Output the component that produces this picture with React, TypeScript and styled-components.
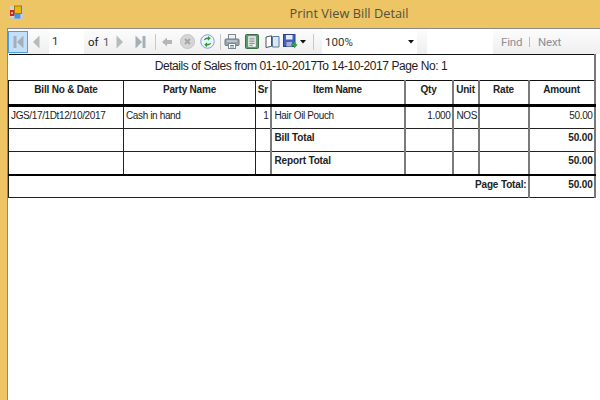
import styled, { createGlobalStyle } from "styled-components"

const Global = createGlobalStyle`
    html, body {
        margin: 0;
        padding: 0;
        width: 600px;
        height: 400px;
        overflow: hidden;
        background: #fff;
    }
    #root {
        height: 100%;
    }
`

const Grip = () => (
    <svg width="14" height="14" viewBox="0 0 14 14">
        <rect x="0.5" y="0.5" width="13" height="13" fill="#dcd3b4" stroke="#c9c6bc" />
        <rect x="1" y="5" width="4.5" height="6" fill="#c8242c" />
        <rect x="2" y="7" width="2" height="2" fill="#f3b0a0" />
        <rect x="5.5" y="1" width="7" height="7.5" fill="#f2b705" stroke="#9c7a18" strokeWidth="1" />
        <rect x="5.5" y="9" width="6" height="4.5" fill="#4f8fe8" />
    </svg>
)

const First = () => (
    <svg width="11" height="14" viewBox="0 0 11 14">
        <rect x="0.5" y="1" width="3" height="12" fill="#a4afb6" />
        <path d="M10.5 0.5v13L4 7z" fill="#a4afb6" />
    </svg>
)
const Prev = () => (
    <svg width="8" height="14" viewBox="0 0 8 14">
        <path d="M7.5 0.5v13L1 7z" fill="#b6bbbe" />
    </svg>
)
const Next = () => (
    <svg width="8" height="14" viewBox="0 0 8 14">
        <path d="M0.5 0.5v13L7 7z" fill="#b6bbbe" />
    </svg>
)
const Last = () => (
    <svg width="11" height="14" viewBox="0 0 11 14">
        <path d="M0.5 0.5v13L7 7z" fill="#a4afb6" />
        <rect x="7.5" y="1" width="3" height="12" fill="#a4afb6" />
    </svg>
)
const Back = () => (
    <svg width="10" height="10" viewBox="0 0 10 10">
        <path d="M0 5l5-4.5V3h5v4H5v2.5z" fill="#b5b5b5" />
    </svg>
)
const Stop = () => (
    <svg width="15" height="15" viewBox="0 0 15 15">
        <circle cx="7.5" cy="7.5" r="7" fill="#d6d6d6" stroke="#c4c4c4" />
        <path d="M5 5l5 5M10 5l-5 5" stroke="#a6a6a6" strokeWidth="2" />
    </svg>
)
const Refresh = () => (
    <svg width="15" height="15" viewBox="0 0 16 16">
        <circle cx="8" cy="8" r="7.2" fill="#eef5fc" stroke="#6f9fd8" />
        <path d="M4 7c.5-2.4 2.4-3.6 4.5-3.2V2l3 2.6-3 2.6V5.6C6.8 5.3 5.5 6 4 7z" fill="#2f9a3c" />
        <path d="M12 9c-.5 2.4-2.4 3.6-4.5 3.2V14l-3-2.6 3-2.6v1.6c1.7.3 3-.4 4.5-1.4z" fill="#2f9a3c" />
    </svg>
)
const Printer = () => (
    <svg width="16" height="15" viewBox="0 0 15 15">
        <rect x="4" y="0.5" width="7" height="5" fill="#eef1f4" stroke="#7c8894" />
        <rect x="0.5" y="5" width="14" height="6.5" rx="1" fill="#98a4ae" stroke="#6c7883" />
        <rect x="2.5" y="6.5" width="10" height="1.2" fill="#cfd6dc" />
        <rect x="4" y="9.5" width="7" height="5" fill="#fff" stroke="#7c8894" />
        <path d="M5.5 11.5h4M5.5 13h4" stroke="#5b8fc9" />
    </svg>
)
const Layout = () => (
    <svg width="14" height="15" viewBox="0 0 14 15">
        <rect x="0.5" y="0.5" width="13" height="14" rx="1" fill="#569a68" stroke="#3c6f48" />
        <rect x="3" y="2" width="8" height="11" fill="#fff" stroke="#7d9a84" strokeWidth="0.6" />
        <path d="M4.3 4.2h5.4M4.3 6h5.4M4.3 7.8h5.4M4.3 9.6h5.4M4.3 11.3h3.6" stroke="#5c666f" strokeWidth="0.8" />
    </svg>
)
const PageSetup = () => (
    <svg width="15" height="13" viewBox="0 0 15 13">
        <path d="M1 2L6.5 0.8v10.5L1 12.5z" fill="#fff" stroke="#46525e" />
        <path d="M7.5 1.5h6.5v10.5H7.5z" fill="#dbe7f4" stroke="#5d7a99" />
    </svg>
)
const Save = () => (
    <svg width="15" height="15" viewBox="0 0 15 15">
        <rect x="0.5" y="0.5" width="11.5" height="12" fill="#4560c0" stroke="#2d3f8f" />
        <rect x="3" y="1" width="6.5" height="4.5" fill="#e8eef8" />
        <rect x="3.5" y="8" width="5.5" height="4.5" fill="#a4b0dc" />
        <path d="M8 10h3V7.5l3.5 3.5-3.5 3.5V12H8z" fill="#2fa24a" />
    </svg>
)
const Caret = () => (
    <svg width="6" height="4" viewBox="0 0 6 4">
        <path d="M0 0h6L3 3.5z" fill="#111" />
    </svg>
)

export default function App() {
    return (
        <>
            <Global />
            <Window>
                <TitleBar>
                    <TitleIcon><Grip /></TitleIcon>
                    <Title>Print View Bill Detail</Title>
                </TitleBar>
                <Body>
                    <Toolbar>
                        <ActiveButton><First /></ActiveButton>
                        <ToolButton $width={16}><Prev /></ToolButton>
                        <PageBox>1</PageBox>
                        <OfLabel>of</OfLabel>
                        <PageCount>1</PageCount>
                        <ToolButton><Next /></ToolButton>
                        <ToolButton><Last /></ToolButton>
                        <Divider $left={5} $right={0} />
                        <ToolButton $width={21}><Back /></ToolButton>
                        <ToolButton><Stop /></ToolButton>
                        <ToolButton><Refresh /></ToolButton>
                        <Divider $left={3} $right={1} />
                        <ToolButton><Printer /></ToolButton>
                        <ToolButton><Layout /></ToolButton>
                        <ToolButton><PageSetup /></ToolButton>
                        <SaveButton><Save /><Caret /></SaveButton>
                        <Divider $left={5} $right={0} />
                        <ZoomBox>
                            <span>100%</span>
                            <Caret />
                        </ZoomBox>
                        <SearchBox />
                        <FindLink>Find</FindLink>
                        <LinkDivider />
                        <FindLink>Next</FindLink>
                    </Toolbar>
                    <Report>
                        <Sheet>
                            <colgroup>
                                <col width="115" />
                                <col width="132" />
                                <col width="15" />
                                <col width="134" />
                                <col width="48" />
                                <col width="26" />
                                <col width="50" />
                                <col width="66" />
                            </colgroup>
                            <tbody>
                                <HeadingRow>
                                    <Heading colSpan={8}>Details of Sales from 01-10-2017To 14-10-2017 Page No: 1</Heading>
                                </HeadingRow>
                                <HeadRow>
                                    <Head>Bill No &amp; Date</Head>
                                    <Head>Party Name</Head>
                                    <Head>Sr</Head>
                                    <Head $soft>Item Name</Head>
                                    <Head $soft>Qty</Head>
                                    <Head $soft>Unit</Head>
                                    <Head $soft>Rate</Head>
                                    <Head $soft>Amount</Head>
                                </HeadRow>
                                <Row>
                                    <Cell>JGS/17/1Dt12/10/2017</Cell>
                                    <Cell>Cash in hand</Cell>
                                    <Cell $right>1</Cell>
                                    <Cell $soft>Hair Oil Pouch</Cell>
                                    <Cell $soft $right>1.000</Cell>
                                    <Cell $soft>NOS</Cell>
                                    <Cell $soft />
                                    <Cell $soft $right>50.00</Cell>
                                </Row>
                                <Row>
                                    <Cell />
                                    <Cell />
                                    <Cell />
                                    <Cell $soft $bold>Bill Total</Cell>
                                    <Cell $soft />
                                    <Cell $soft />
                                    <Cell $soft />
                                    <Cell $soft $right $bold>50.00</Cell>
                                </Row>
                                <LastRow>
                                    <Cell />
                                    <Cell />
                                    <Cell />
                                    <Cell $soft $bold>Report Total</Cell>
                                    <Cell $soft />
                                    <Cell $soft />
                                    <Cell $soft />
                                    <Cell $soft $right $bold>50.00</Cell>
                                </LastRow>
                                <Row>
                                    <Cell colSpan={7} $right $bold>Page Total:</Cell>
                                    <Cell $soft $right $bold>50.00</Cell>
                                </Row>
                            </tbody>
                        </Sheet>
                    </Report>
                </Body>
            </Window>
        </>
    )
}

const Window = styled.div`
    width: 600px;
    height: 400px;
    display: flex;
    flex-direction: column;
    background: #edc565;
    font-family: "Liberation Sans", Arial, sans-serif;
`

const TitleBar = styled.div`
    height: 28px;
    flex: none;
    box-sizing: border-box;
    padding: 0 0 2px 98px;
    display: flex;
    align-items: center;
    justify-content: center;
    position: relative;
`

const TitleIcon = styled.div`
    position: absolute;
    left: 9px;
    top: 5px;
    display: flex;
`

const Title = styled.div`
    font-family: "Open Sans", sans-serif;
    font-size: 12.8px;
    color: #55503f;
`

const Body = styled.div`
    flex: 1;
    display: flex;
    flex-direction: column;
    margin-left: 7px;
    border-left: 1px solid #8a8a8a;
    border-top: 1px solid #8a8a8a;
    background: #fff;
    min-height: 0;
`

const Toolbar = styled.div`
    height: 25px;
    flex: none;
    display: flex;
    align-items: center;
    background: linear-gradient(#fcfcfc, #efefef);
    font-family: Roboto, sans-serif;
    font-size: 11.5px;
    color: #333;
`

const ToolButton = styled.div<{ $width?: number }>`
    height: 22px;
    width: ${props => props.$width ?? 20}px;
    flex: none;
    display: flex;
    align-items: center;
    justify-content: center;
`

const ActiveButton = styled(ToolButton)`
    background: #c4e0f8;
    border: 1px solid #4a9fe8;
    box-sizing: border-box;
`

const SaveButton = styled(ToolButton)`
    width: 26px;
    box-sizing: border-box;
    padding-right: 2px;
    gap: 2px;
`

const PageBox = styled.div`
    width: 35px;
    height: 25px;
    box-sizing: border-box;
    margin-left: 5px;
    padding: 5px 3px;
    background: #fff;
    color: #4b1a52;
    flex: none;
`

const OfLabel = styled.span`
    margin-left: 4px;
    width: 9px;
    color: #222;
`

const PageCount = styled.span`
    margin-left: 6px;
    width: 7px;
    color: #555;
`

const Divider = styled.div<{ $left: number; $right: number }>`
    width: 1px;
    height: 16px;
    background: #c8c8c8;
    margin: 0 ${props => props.$right}px 0 ${props => props.$left}px;
    flex: none;
`

const ZoomBox = styled.div`
    width: 95px;
    height: 25px;
    box-sizing: border-box;
    padding: 0 3px 0 3px;
    margin-left: 8px;
    background: #fff;
    color: #333;
    display: flex;
    align-items: center;
    justify-content: space-between;
    flex: none;
`

const SearchBox = styled.div`
    width: 66px;
    height: 25px;
    margin-left: 10px;
    background: #fff;
    flex: none;
`

const FindLink = styled.span`
    color: #8a8f96;
    width: 20px;
    margin-left: 8px;
    letter-spacing: -0.2px;
`

const LinkDivider = styled.div`
    width: 1px;
    height: 10px;
    background: #bbb;
    margin-left: 8px;
`

const Report = styled.div`
    flex: 1;
    background: #fff;
    min-height: 0;
`

const Sheet = styled.table`
    width: 586px;
    table-layout: fixed;
    border-collapse: collapse;
    color: #222;
    font-size: 10px;
    line-height: 12px;
    letter-spacing: -0.37px;
    border-top: 1px solid #111;
    border-bottom: 1px solid #111;
    border-right: 2px solid #777;
`

const HeadingRow = styled.tr`
    height: 26px;
`

const Heading = styled.td`
    padding: 4px 0 0;
    vertical-align: top;
    text-align: center;
    font-size: 12px;
    line-height: 14px;
    letter-spacing: -0.42px;
    border-bottom: 1px solid #111;
`

const HeadRow = styled.tr`
    height: 25px;
`

const Head = styled.td<{ $soft?: boolean }>`
    padding: 3px 0 0;
    vertical-align: top;
    text-align: center;
    font-weight: 700;
    letter-spacing: -0.2px;
    border-left: ${props => (props.$soft ? "2px solid #7a7a7a" : "1px solid #222")};
    border-bottom: 3px solid #000;
    overflow: hidden;
    white-space: nowrap;
`

const Row = styled.tr`
    height: 23px;
`

const LastRow = styled(Row)`
    & > td {
        border-bottom: 2px solid #000;
    }
`

const Cell = styled.td<{ $right?: boolean; $bold?: boolean; $soft?: boolean }>`
    padding: 3px 1px 0 ${props => (props.$soft ? 3 : 2)}px;
    vertical-align: top;
    text-align: ${props => (props.$right ? "right" : "left")};
    font-weight: ${props => (props.$bold ? 700 : 400)};
    letter-spacing: ${props => (props.$bold ? "-0.15px" : "-0.37px")};
    border-left: ${props => (props.$soft ? "2px solid #7a7a7a" : "1px solid #222")};
    border-bottom: 1px solid #222;
    overflow: hidden;
    white-space: nowrap;
`
